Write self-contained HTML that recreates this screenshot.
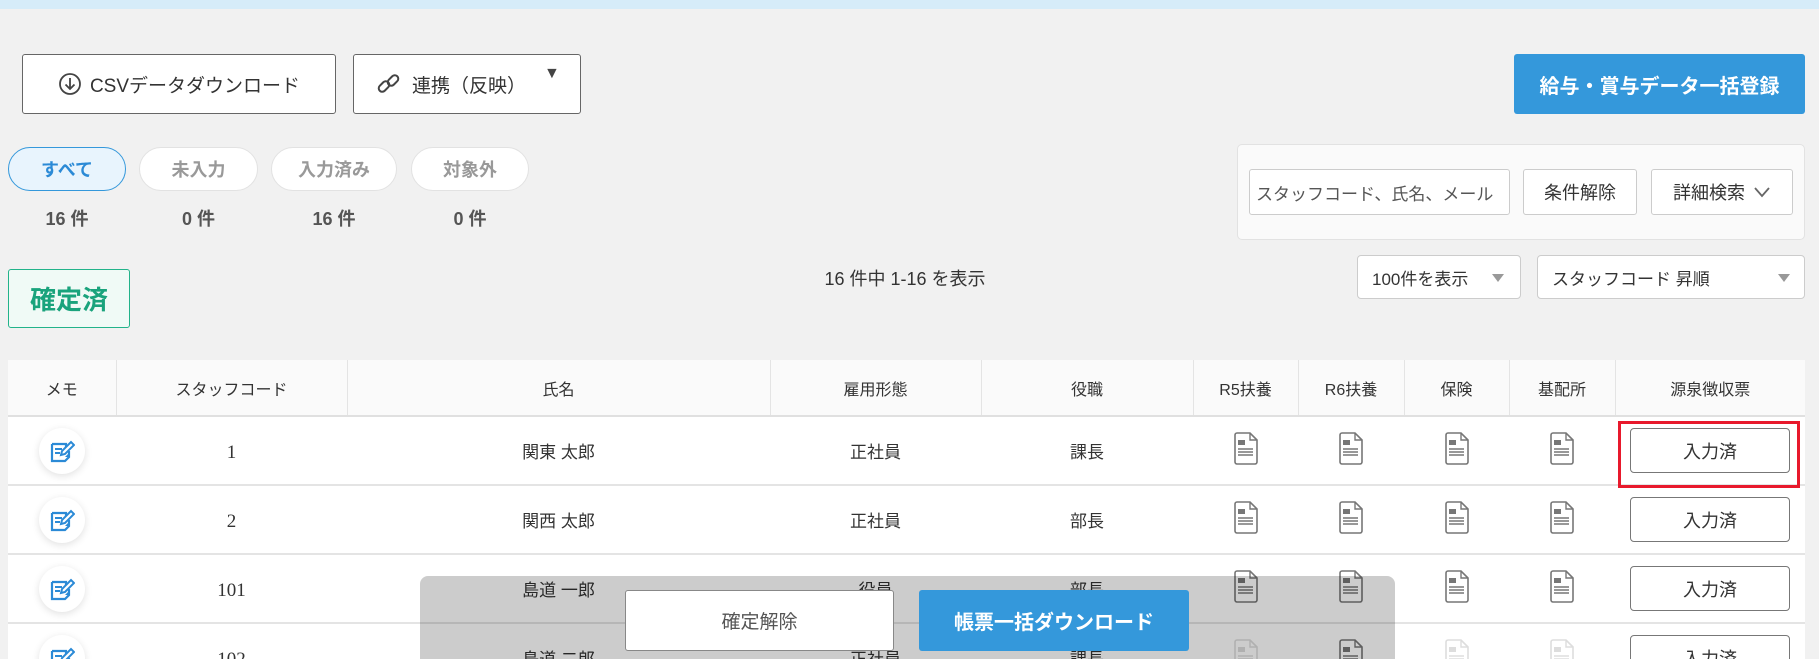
<!DOCTYPE html>
<html style="height:659px;overflow:hidden"><head><meta charset="utf-8"><style>
*{box-sizing:border-box;margin:0;padding:0}
body{width:1819px;height:659px;overflow:hidden;background:#f1f1f1;font-family:"Liberation Sans","Noto Sans CJK JP",sans-serif;color:#333;position:relative}
.a{position:absolute}
.btn{position:absolute;background:#fff;border:1px solid #666;border-radius:3px;display:flex;align-items:center;justify-content:center;font-size:19px;color:#333}
.tab{position:absolute;top:147px;height:44px;border:1px solid #e2e2e2;background:#fff;border-radius:22px;display:flex;align-items:center;justify-content:center;font-size:18px;font-weight:bold;color:#999}
.cnt{position:absolute;top:205px;font-size:18px;font-weight:bold;color:#555;text-align:center}
.sel{position:absolute;background:#fff;border:1px solid #ccc;border-radius:4px;font-size:17px;display:flex;align-items:center;padding-left:14px}
.tri{position:absolute;width:0;height:0;border-left:6px solid transparent;border-right:6px solid transparent;border-top:8px solid #999}
#wrap{position:absolute;left:0;top:0;width:1819px;height:659px;overflow:hidden}
table{position:absolute;left:8px;top:360px;width:1797px;border-collapse:collapse;background:#fff;font-size:17px}
th{height:56px;background:#fafafa;font-weight:normal;font-size:16px;border-right:1px solid #e4e4e4;border-bottom:2px solid #e0e0e0}
td{height:69px;text-align:center;border-bottom:2px solid #e4e4e4;position:relative}
.num{font-family:"Liberation Serif","Noto Serif CJK SC",serif;font-size:19px;padding-top:4px}
.memo{width:46px;height:46px;border-radius:50%;background:#fff;box-shadow:0 2px 8px rgba(0,0,0,.12);display:inline-flex;align-items:center;justify-content:center}
.ib{display:inline-flex;width:160px;height:45px;border:1px solid #777;border-radius:4px;align-items:center;justify-content:center;font-size:18px;background:#fff}
</style></head><body><div id="wrap">
<div class="a" style="left:0;top:0;width:1819px;height:9px;background:#d6ecf9"></div>

<div class="btn" style="left:22px;top:54px;width:314px;height:60px"><svg width="24" height="24" viewBox="0 0 24 24" style="margin-right:8px"><circle cx="12" cy="12" r="10" fill="none" stroke="#444" stroke-width="1.8"/><path d="M12 6v11M7.5 12.5 12 17l4.5-4.5" fill="none" stroke="#444" stroke-width="1.8"/></svg>CSVデータダウンロード</div>
<div class="btn" style="left:353px;top:54px;width:228px;height:60px;justify-content:flex-start;padding-left:22px"><svg width="26" height="24" viewBox="0 0 26 24" style="margin-right:10px"><g fill="none" stroke="#444" stroke-width="2"><rect x="2" y="11" width="12" height="7" rx="3.5" transform="rotate(-45 8 14.5)"/><rect x="11" y="5" width="12" height="7" rx="3.5" transform="rotate(-45 17 8.5)"/></g></svg>連携（反映）<span style="position:absolute;left:190px;top:10px;font-size:16px;color:#444">▼</span></div>
<div class="a" style="left:1514px;top:54px;width:291px;height:60px;background:#3498db;border-radius:3px;color:#fff;font-size:20px;font-weight:bold;display:flex;align-items:center;justify-content:center">給与・賞与データ一括登録</div>

<div class="tab" style="left:8px;width:118px;background:#e8f4fd;border-color:#3498db;color:#2b8ad6">すべて</div>
<div class="tab" style="left:139px;width:119px">未入力</div>
<div class="tab" style="left:271px;width:126px">入力済み</div>
<div class="tab" style="left:411px;width:118px">対象外</div>
<div class="cnt" style="left:8px;width:118px">16 件</div>
<div class="cnt" style="left:139px;width:119px">0 件</div>
<div class="cnt" style="left:271px;width:126px">16 件</div>
<div class="cnt" style="left:411px;width:118px">0 件</div>

<div class="a" style="left:1237px;top:144px;width:568px;height:96px;background:#fafafa;border:1px solid #e2e2e2;border-radius:5px"></div>
<div class="a" style="left:1249px;top:169px;width:261px;height:46px;background:#fff;border:1px solid #ccc;border-radius:3px;font-size:17px;color:#555;display:flex;align-items:center;padding-left:6px;white-space:nowrap;overflow:hidden">スタッフコード、氏名、メール</div>
<div class="a" style="left:1523px;top:169px;width:114px;height:46px;background:#fff;border:1px solid #ccc;border-radius:3px;font-size:18px;display:flex;align-items:center;justify-content:center">条件解除</div>
<div class="a" style="left:1651px;top:169px;width:142px;height:46px;background:#fff;border:1px solid #ccc;border-radius:3px;font-size:18px;display:flex;align-items:center;justify-content:center">詳細検索 <svg width="18" height="12" viewBox="0 0 18 12" style="margin-left:8px"><path d="M2 2l7 8 7-8" fill="none" stroke="#666" stroke-width="1.8"/></svg></div>

<div class="a" style="left:8px;top:269px;width:122px;height:59px;background:#f0faf6;border:1px solid #22b38a;border-radius:3px;color:#1aa37c;font-size:26px;font-weight:bold;display:flex;align-items:center;justify-content:center">確定済</div>
<div class="a" style="left:780px;top:265px;width:250px;text-align:center;font-size:18px">16 件中 1-16 を表示</div>

<div class="sel" style="left:1357px;top:255px;width:164px;height:44px">100件を表示<div class="tri" style="left:134px;top:18px"></div></div>
<div class="sel" style="left:1537px;top:255px;width:268px;height:44px">スタッフコード 昇順<div class="tri" style="left:240px;top:18px"></div></div>

<table>
<tr><th style="width:108px">メモ</th><th style="width:231px">スタッフコード</th><th style="width:423px">氏名</th><th style="width:211px">雇用形態</th><th style="width:212px">役職</th><th style="width:105px">R5扶養</th><th style="width:106px">R6扶養</th><th style="width:105px">保険</th><th style="width:106px">基配所</th><th style="border-right:none">源泉徴収票</th></tr>
<tr><td><span class="memo">M</span></td><td class="num">1</td><td>関東 太郎</td><td>正社員</td><td>課長</td><td>D</td><td>D</td><td>D</td><td>D</td><td><span class="ib">入力済</span></td></tr>
<tr><td><span class="memo">M</span></td><td class="num">2</td><td>関西 太郎</td><td>正社員</td><td>部長</td><td>D</td><td>D</td><td>D</td><td>D</td><td><span class="ib">入力済</span></td></tr>
<tr><td><span class="memo">M</span></td><td class="num">101</td><td>島道 一郎</td><td>役員</td><td>部長</td><td>D</td><td>D</td><td>D</td><td>D</td><td><span class="ib">入力済</span></td></tr>
<tr><td><span class="memo">M</span></td><td class="num">102</td><td>島道 二郎</td><td>正社員</td><td>課長</td><td>F</td><td>D</td><td>F</td><td>F</td><td><span class="ib">入力済</span></td></tr>
</table>

<div class="a" style="left:1618px;top:421px;width:182px;height:67px;border:3px solid #e8192c"></div>

<div class="a" style="left:420px;top:576px;width:975px;height:90px;background:rgba(0,0,0,.2);border-radius:8px 8px 0 0"></div>
<div class="a" style="left:625px;top:590px;width:269px;height:61px;background:#fff;border:1px solid #888;border-radius:3px;font-size:19px;color:#555;display:flex;align-items:center;justify-content:center">確定解除</div>
<div class="a" style="left:919px;top:590px;width:270px;height:61px;background:#3498db;border-radius:3px;font-size:20px;font-weight:bold;color:#fff;display:flex;align-items:center;justify-content:center">帳票一括ダウンロード</div>
</div>
<script>
var memo='<svg width="26" height="26" viewBox="0 0 26 26"><path d="M3 6h14v6M3 6v17h13l4-4v-6" fill="none" stroke="#2b8ad6" stroke-width="2.2"/><path d="M6 11h7M6 15h5" stroke="#2b8ad6" stroke-width="2"/><path d="M16 19l4-4v4z" fill="#2b8ad6"/><path d="M12 17l1-4 9-9 3 3-9 9z" fill="#fff" stroke="#2b8ad6" stroke-width="2"/></svg>';
function doc(c,f){return '<svg width="26" height="33" viewBox="0 0 26 33"><path d="M4 1h13l7 7v22a2 2 0 0 1-2 2H4a2 2 0 0 1-2-2V3a2 2 0 0 1 2-2z" fill="#fff" stroke="'+c+'" stroke-width="1.6"/><path d="M17 1v7h7" fill="none" stroke="'+c+'" stroke-width="1.4"/><rect x="5" y="8" width="7" height="5" fill="'+f+'"/><path d="M5 17h15M5 20h15M5 23h15" stroke="'+f+'" stroke-width="1.4"/></svg>';}
document.querySelectorAll('.memo').forEach(function(e){e.innerHTML=memo});
document.querySelectorAll('td').forEach(function(e){if(e.textContent==='D')e.innerHTML=doc('#777','#777');else if(e.textContent==='F')e.innerHTML=doc('#ddd','#ddd');});
</script>
</body></html>
